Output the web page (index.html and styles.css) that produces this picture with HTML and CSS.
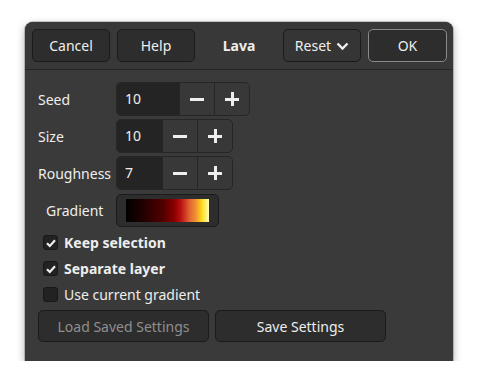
FILE: index.html
```html
<!DOCTYPE html>
<html>
<head>
<meta charset="utf-8">
<link rel="stylesheet" href="styles.css">
</head>
<body>
<div class="window">
  <div class="header">
    <button class="btn hbtn">Cancel</button>
    <button class="btn hbtn">Help</button>
    <div class="title">Lava</div>
    <button class="btn hbtn reset">Reset
      <svg width="13" height="9" viewBox="0 0 13 9"><path d="M1.5 1.5 L6.5 6.5 L11.5 1.5" fill="none" stroke="#eeeeec" stroke-width="2.4"/></svg>
    </button>
    <button class="btn hbtn ok">OK</button>
  </div>
  <div class="content">
    <div class="spins">
      <span class="lbl">Seed</span>
      <div class="spin"><span class="entry wide">10</span><span class="sb minus"></span><span class="sb plus"></span></div>
      <span class="lbl">Size</span>
      <div class="spin"><span class="entry">10</span><span class="sb minus"></span><span class="sb plus"></span></div>
      <span class="lbl">Roughness</span>
      <div class="spin"><span class="entry">7</span><span class="sb minus"></span><span class="sb plus"></span></div>
    </div>
    <div class="gradrow">
      <span class="lbl">Gradient</span>
      <div class="gradbtn"><div class="grad"></div></div>
    </div>
    <div class="checks">
      <div class="check"><span class="box"><svg width="12" height="12" viewBox="0 0 12 12"><path d="M2 6.2 L4.8 9 L10 3.2" fill="none" stroke="#eeeeec" stroke-width="2.2"/></svg></span><b>Keep selection</b></div>
      <div class="check"><span class="box"><svg width="12" height="12" viewBox="0 0 12 12"><path d="M2 6.2 L4.8 9 L10 3.2" fill="none" stroke="#eeeeec" stroke-width="2.2"/></svg></span><b>Separate layer</b></div>
      <div class="check"><span class="box"></span>Use current gradient</div>
    </div>
    <div class="bottom">
      <button class="btn bbtn disabled">Load Saved Settings</button>
      <button class="btn bbtn">Save Settings</button>
    </div>
  </div>
</div>
</body>
</html>
```
FILE: styles.css
```css
* { box-sizing: border-box; }
body {
  margin: 0;
  background: #ffffff;
  font-family: "Noto Sans", "Open Sans", sans-serif;
  font-size: 14px;
  color: #eeeeec;
}
.window {
  margin: 22px 0 0 25px;
  width: 428px;
  height: 339px;
  background: #3a3a3a;
  border-radius: 8px 8px 0 0;
  box-shadow: 0 3px 9px rgba(0,0,0,0.35), 0 0 0 1px rgba(0,0,0,0.18);
  overflow: hidden;
}
.header {
  height: 48px;
  background: #383838;
  border-bottom: 1px solid #262626;
  display: flex;
  align-items: flex-start;
  padding: 7px 6px 0 7px;
  gap: 7px;
}
.btn {
  font-family: inherit;
  font-size: 14px;
  color: #eeeeec;
  background: #2d2d2d;
  border: 1px solid #1b1b1b;
  border-radius: 5px;
  padding: 0;
  display: flex;
  align-items: center;
  justify-content: center;
}
.hbtn { width: 78px; height: 33px; }
.title {
  flex: 1;
  text-align: center;
  font-weight: bold;
  line-height: 33px;
}
.reset { gap: 5px; background: #353535; }
.reset svg { margin-top: 1px; }
.ok { width: 79px; border: 1px solid #8a8a8a; background: #2d2d2d; }
.content { padding: 12px 0 0 13px; }
.spins {
  display: grid;
  grid-template-columns: 78px auto;
  row-gap: 3px;
  align-items: center;
  justify-items: start;
}
.spin {
  display: flex;
  height: 34px;
  border: 1px solid #262626;
  border-radius: 5px;
  overflow: hidden;
  background: #383838;
}
.entry {
  width: 45px;
  background: #242424;
  padding-left: 8px;
  line-height: 32px;
}
.entry.wide { width: 62px; }
.sb {
  width: 35px;
  border-left: 1px solid #262626;
  position: relative;
}
.sb::before, .plus::after {
  content: "";
  position: absolute;
  left: 50%;
  top: 50%;
  width: 14px;
  height: 2.5px;
  margin: -1px 0 0 -7px;
  background: #eeeeec;
}
.plus::after {
  width: 2.5px;
  height: 14px;
  margin: -7px 0 0 -1px;
}
.gradrow {
  display: flex;
  align-items: center;
  margin-top: 4px;
  height: 33px;
}
.gradrow .lbl { width: 78px; padding-left: 8px; }
.gradbtn {
  width: 103px;
  height: 33px;
  background: #2d2d2d;
  border: 1px solid #1b1b1b;
  border-radius: 5px;
  padding: 4px 9px;
}
.grad {
  height: 100%;
  background: linear-gradient(to right, #000000 0%, #2a0000 25%, #520000 45%, #8a0000 58%, #b81010 66%, #e06030 76%, #f09030 84%, #ffe020 92%, #fffec0 100%);
}
.checks {
  display: flex;
  flex-direction: column;
  gap: 11px;
  margin-top: 8px;
  padding-left: 5px;
}
.check {
  display: flex;
  align-items: center;
  height: 15px;
  line-height: 15px;
  gap: 6px;
}
.box {
  flex: none;
  width: 15px;
  height: 15px;
  border: 1px solid #181818;
  border-radius: 3px;
  background: #222222;
  display: flex;
  align-items: center;
  justify-content: center;
}
.box svg { display: block; flex: none; }
.bottom {
  display: flex;
  gap: 6px;
  margin-top: 8px;
}
.bbtn { width: 171px; height: 32px; }
.disabled { color: #8f8f8f; }
```
